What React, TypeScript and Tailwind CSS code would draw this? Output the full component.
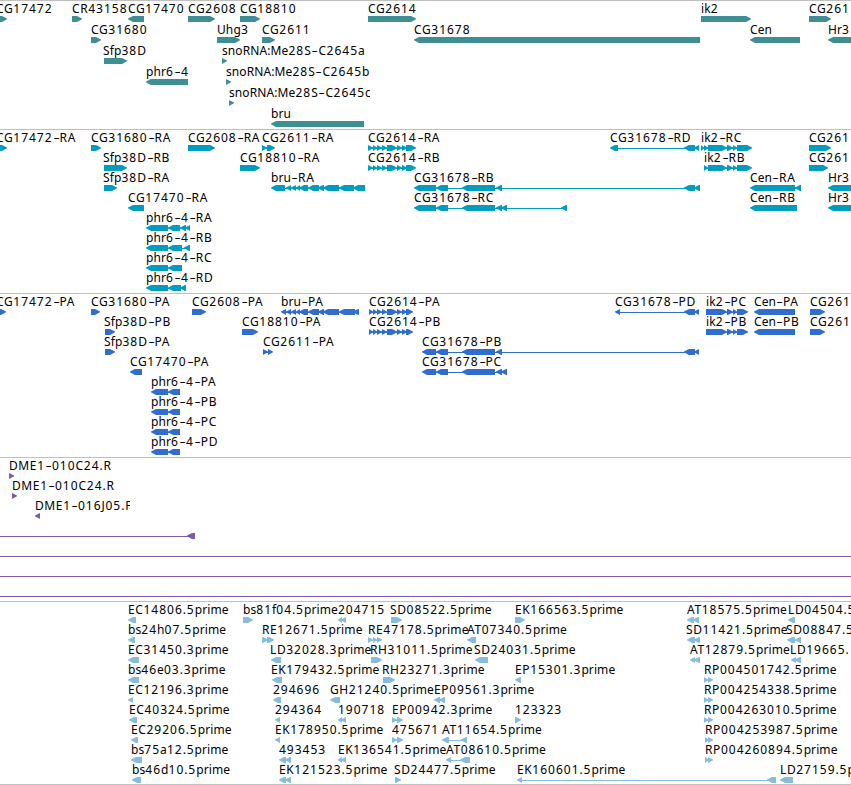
type Strand = '+' | '-'
type Block = [number, number]
interface Feature { name?: string; at?: number; clip?: number; strand: Strand; blocks: Block[] }
interface TrackData { id: string; color: string; rowClass: string; padClass: string; rows: Feature[][] }

// f = forward strand, r = reverse strand
const f = (name: string, ...blocks: Block[]): Feature => ({ name, strand: '+', blocks })
const r = (name: string, ...blocks: Block[]): Feature => ({ name, strand: '-', blocks })

const cg2614R: Block[] = [[368, 373], [373, 377], [377, 382], [382, 387], [387, 397], [397, 402], [402, 407], [406, 416]]
const cg2614P: Block[] = [[369, 373], [373, 377], [377, 382], [382, 387], [387, 397], [397, 402], [402, 407], [406, 413]]
const ik2R: Block[] = [[704, 708], [708, 727], [727, 733], [733, 737], [737, 752]]
const ik2P: Block[] = [[706, 727], [727, 733], [733, 737], [737, 748]]
const bruMid: Block[] = [[286, 291], [291, 296], [296, 300], [299, 308], [308, 319], [318, 324], [323, 339]]

const tracks: TrackData[] = [
  {
    id: 'gene', color: '#3f8e94', rowClass: 'h-[21px]', padClass: 'pb-[2px]',
    rows: [
      [{ ...f('CG17472', [-12, 7]), at: -4 }, f('CR43158', [72, 82]), r('CG17470', [128, 144]), f('CG2608', [188, 215]), f('CG18810', [240, 260]), f('CG2614', [368, 416]), f('ik2', [701, 751]), f('CG261', [809, 831])],
      [f('CG31680', [91, 101]), f('Uhg3', [217, 240]), f('CG2611', [262, 275]), r('CG31678', [414, 700]), r('Cen', [750, 800]), r('Hr3', [828, 870])],
      [{ ...f('Sfp38D', [104, 127]), at: 103 }, f('snoRNA:Me28S-C2645a', [222, 227])],
      [r('phr6-4', [146, 188]), f('snoRNA:Me28S-C2645b', [226, 231])],
      [{ ...f('snoRNA:Me28S-C2645c', [229, 234]), clip: 141 }],
      [r('bru', [271, 364])],
    ],
  },
  {
    id: 'transcript', color: '#009dbe', rowClass: 'h-5', padClass: 'pb-[3px]',
    rows: [
      [{ ...f('CG17472-RA', [-12, 7]), at: -4 }, f('CG31680-RA', [91, 101]), f('CG2608-RA', [188, 215]), f('CG2611-RA', [262, 267], [267, 275]), f('CG2614-RA', ...cg2614R), r('CG31678-RD', [610, 618], [684, 695], [694, 699]), f('ik2-RC', [701, 704], ...ik2R), f('CG261', [809, 831])],
      [{ ...f('Sfp38D-RB', [104, 127]), at: 103 }, f('CG18810-RA', [240, 260]), f('CG2614-RB', ...cg2614R), f('ik2-RB', ...ik2R), f('CG261', [809, 828])],
      [{ ...f('Sfp38D-RA', [104, 117]), at: 103 }, r('bru-RA', [271, 285], ...bruMid, [339, 354], [353, 365]), r('CG31678-RB', [414, 436], [436, 448], [462, 495], [496, 502], [684, 695], [694, 700]), r('Cen-RA', [750, 795], [795, 801]), r('Hr3', [828, 870])],
      [r('CG17470-RA', [128, 144]), r('CG31678-RC', [414, 436], [436, 448], [462, 495], [496, 502], [501, 507], [561, 567]), r('Cen-RB', [750, 797]), r('Hr3', [828, 870])],
      [r('phr6-4-RA', [146, 168], [168, 180], [180, 186], [185, 190])],
      [r('phr6-4-RB', [146, 168], [168, 182], [184, 190])],
      [r('phr6-4-RC', [146, 168], [168, 182])],
      [r('phr6-4-RD', [146, 168], [168, 181], [180, 186])],
    ],
  },
  {
    id: 'cds', color: '#316dcf', rowClass: 'h-5', padClass: 'pb-[3px]',
    rows: [
      [{ ...f('CG17472-PA', [-12, 6]), at: -4 }, f('CG31680-PA', [91, 100]), f('CG2608-PA', [192, 206]), r('bru-PA', [281, 286], ...bruMid, [339, 355], [353, 359]), f('CG2614-PA', ...cg2614P), r('CG31678-PD', [615, 620], [684, 695], [694, 699]), f('ik2-PC', ...ik2P), r('Cen-PA', [754, 795]), f('CG261', [810, 825])],
      [{ ...f('Sfp38D-PB', [105, 115]), at: 104 }, f('CG18810-PA', [242, 258]), f('CG2614-PB', ...cg2614P), f('ik2-PB', ...ik2P), r('Cen-PB', [754, 795]), f('CG261', [810, 825])],
      [{ ...f('Sfp38D-PA', [105, 115]), at: 104 }, f('CG2611-PA', [263, 268], [268, 273]), r('CG31678-PB', [422, 436], [436, 448], [462, 495], [496, 502], [684, 695], [694, 699])],
      [r('CG17470-PA', [130, 142]), r('CG31678-PC', [422, 436], [436, 448], [462, 495], [496, 502], [501, 507])],
      [r('phr6-4-PA', [151, 168], [168, 180])],
      [r('phr6-4-PB', [151, 168], [168, 180])],
      [r('phr6-4-PC', [151, 168], [168, 180])],
      [r('phr6-4-PD', [151, 168], [168, 180])],
    ],
  },
  {
    id: 'bac', color: '#7a5caa', rowClass: 'h-5', padClass: 'pb-[3px]',
    rows: [
      [f('DME1-010C24.R', [9, 14])],
      [f('DME1-010C24.R', [12, 17])],
      [{ ...r('DME1-016J05.F', [35, 40]), clip: 95 }],
      [{ strand: '-', blocks: [[-20, -10], [187, 195]] }],
      [{ strand: '-', blocks: [[-20, -10], [870, 880]] }],
      [{ strand: '-', blocks: [[-20, -10], [870, 880]] }],
      [{ strand: '-', blocks: [[-20, -10], [870, 880]] }],
    ],
  },
  {
    id: 'est', color: '#87bcde', rowClass: 'h-5', padClass: 'pb-[2px]',
    rows: [
      [r('EC14806.5prime', [128, 136]), f('bs81f04.5prime', [243, 253]), r('204715', [338, 342], [341, 346]), { ...f('SD08522.5prime', [391, 402]), at: 390 }, f('EK166563.5prime', [515, 525]), r('AT18575.5prime', [687, 694], [693, 699]), r('LD04504.5prime', [788, 795])],
      [r('bs24h07.5prime', [128, 135]), f('RE12671.5prime', [262, 268], [267, 274]), f('RE47178.5prime', [368, 373], [373, 377], [377, 382]), r('AT07340.5prime', [467, 476]), { ...r('SD11421.5prime', [687, 695], [694, 700]), at: 686 }, { ...r('SD08847.5prime', [787, 795], [795, 801]), at: 786 }],
      [r('EC31450.3prime', [128, 139]), { ...r('LD32028.3prime', [271, 281]), at: 270 }, { ...f('RH31011.5prime', [371, 382]), at: 370 }, { ...r('SD24031.5prime', [475, 488]), at: 474 }, r('AT12879.5prime', [690, 695], [694, 700]), { ...r('LD19665.5prime', [791, 796], [795, 801]), at: 790, clip: 59 }],
      [r('bs46e03.3prime', [128, 139]), { ...r('EK179432.5prime', [272, 282]), at: 271 }, { ...f('RH23271.3prime', [383, 395]), at: 382 }, r('EP15301.3prime', [515, 521]), f('RP004501742.5prime', [704, 708], [708, 713])],
      [r('EC12196.3prime', [128, 133]), r('294696', [273, 281]), r('GH21240.5prime', [330, 340]), r('EP09561.3prime', [434, 440], [439, 445]), f('RP004254338.5prime', [704, 708], [708, 713])],
      [r('EC40324.5prime', [129, 137]), r('294364', [275, 280]), r('190718', [338, 342], [341, 346]), f('EP00942.3prime', [392, 397], [397, 403]), f('123323', [515, 521]), f('RP004263010.5prime', [704, 708], [708, 713])],
      [r('EC29206.5prime', [131, 138]), r('EK178950.5prime', [275, 280]), f('475671', [392, 397], [397, 403]), r('AT11654.5prime', [442, 449], [461, 467]), f('RP004253987.5prime', [705, 709], [708, 713])],
      [r('bs75a12.5prime', [131, 142]), r('493453', [279, 286], [285, 291]), r('EK136541.5prime', [338, 342], [341, 346]), r('AT08610.5prime', [446, 451], [460, 470]), f('RP004260894.5prime', [705, 709], [708, 713])],
      [r('bs46d10.5prime', [132, 141]), r('EK121523.5prime', [279, 286], [285, 291]), { ...f('SD24477.5prime', [395, 401]), at: 394 }, r('EK160601.5prime', [517, 522], [767, 776]), r('LD27159.5prime', [780, 793])],
    ],
  },
]

function blockPoints([a, b]: Block, strand: Strand) {
  const head = Math.min(5, b - a)
  return strand === '+'
    ? `${a},0 ${b - head},0 ${b},2.4 ${b},3.2 ${b - head},6 ${a},6`
    : `${b},0 ${a + head},0 ${a},2.4 ${a},3.2 ${a + head},6 ${b},6`
}

function Label({ text, x, clip }: { text: string; x: number; clip?: number }) {
  return (
    <span className="absolute top-0 whitespace-pre overflow-hidden" style={{ left: x, width: clip }}>
      {text.split(/(\d+|-|\.)/).filter(Boolean).map((run, i) => {
        if (/\d/.test(run)) return <span key={i} className="tracking-[1px]">{run}</span>
        if (run === '-') return <span key={i} className="inline-block w-[7px] text-center scale-x-[1.6]">-</span>
        if (run === '.') return <span key={i} className="tracking-[0.8px]">.</span>
        return <span key={i} className={/[a-z]/.test(run) ? 'tracking-[0.1px]' : 'tracking-[0.6px]'}>{run}</span>
      })}
    </span>
  )
}

function Row({ features, color, rowClass }: { features: Feature[]; color: string; rowClass: string }) {
  return (
    <div className={`relative pt-[15px] ${rowClass}`}>
      {features.map((ft, i) => ft.name && <Label key={i} text={ft.name} x={ft.at ?? ft.blocks[0][0]} clip={ft.clip} />)}
      <svg className="relative block" width="851" height="6" fill={color}>
        {features.map((ft, i) => (
          <g key={i}>
            {ft.blocks.length > 1 && (
              <rect x={ft.blocks[0][0] + 1} y="3" width={ft.blocks[ft.blocks.length - 1][1] - ft.blocks[0][0] - 2} height="1" />
            )}
            {ft.blocks.map((b, j) => <polygon key={j} points={blockPoints(b, ft.strand)} />)}
          </g>
        ))}
      </svg>
    </div>
  )
}

export default function App() {
  return (
    <div className="w-[851px] h-[785px] overflow-hidden bg-white text-black text-[12px] leading-[15px] font-['Noto_Sans',sans-serif]">
      {tracks.map(t => (
        <section key={t.id} className={`border-t border-[#c0c0c0] ${t.padClass}`}>
          {t.rows.map((row, i) => <Row key={i} features={row} color={t.color} rowClass={t.rowClass} />)}
        </section>
      ))}
      <div className="h-px bg-[#c0c0c0]" />
    </div>
  )
}
